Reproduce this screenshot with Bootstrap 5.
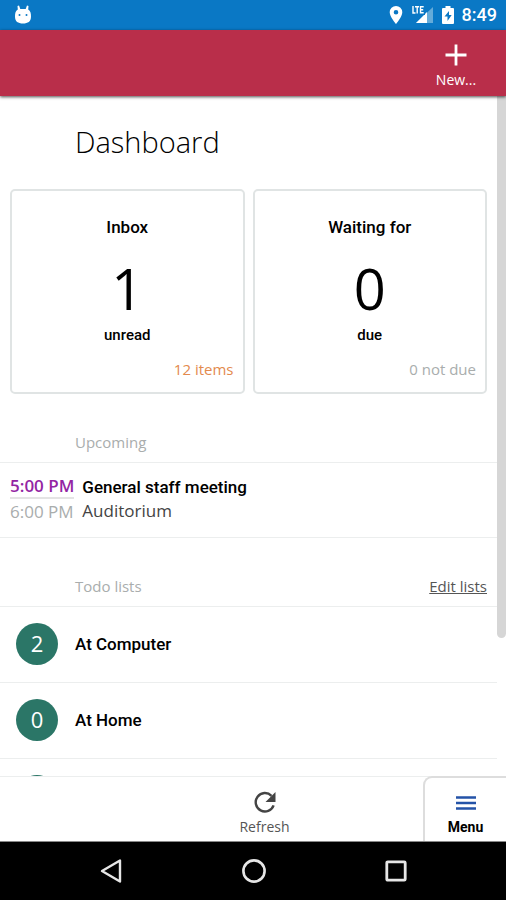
<!DOCTYPE html>
<html lang="en">
<head>
<meta charset="utf-8">
<meta name="viewport" content="width=device-width, initial-scale=1">
<title>Dashboard</title>
<link rel="stylesheet" href="https://cdn.jsdelivr.net/npm/bootstrap@5.3.0/dist/css/bootstrap.min.css">
<style>
  body { font-family: "Open Sans", "Noto Sans", sans-serif; font-size: 15px; line-height: 24px; color: #111; background: #fff; }
  svg { display: block; }
  a { color: inherit; }
  .rb { font-family: Roboto, "Noto Sans", sans-serif; font-weight: 500; color: #000; }
  .status-bar { height: 30px; background: #0a78c5; color: #fff; padding: 0 9px 0 14px; }
  .clock { font-size: 18px; line-height: 30px; color: #fff; }
  .app-bar { height: 66px; background: #b92e4a; box-shadow: 0 1px 3px rgba(0,0,0,.7); z-index: 2; padding: 7px 20px 0 0; }
  .plain-btn { background: none; border: 0; padding: 0; }
  .new-btn { width: 60px; color: #fff; font-size: 14px; line-height: 20px; }
  .scroll-thumb { top: 0; right: 0; width: 9px; height: 542px; background: #d6d6d6; border-radius: 0 0 5px 5px; }
  .page { margin-right: 9px; }
  .page h1 { font-size: 29px; line-height: 40px; font-weight: 300; margin: 26px 0 27px; padding-left: 75px; color: #000; }
  .tiles { gap: 8px; padding: 0 10px; }
  .tile { border: 2px solid #e0e4e4; border-radius: 5px; height: 205px; padding: 24px 9px 11px; text-decoration: none; color: #000; }
  .tile-count { font-size: 56px; line-height: 60px; font-weight: 400; margin: 19px 0 7px; }
  .tile-title, .event-title, .todo { font-size: 17px; }
  .tile-unit { font-size: 15px; line-height: 20px; }
  .orange { color: #e38a4e; }
  .dim { color: #a9adad; }
  .section-head { font-size: 15px; padding: 0 10px 8px 75px; }
  .section-head h2 { font-size: 15px; line-height: 24px; font-weight: 400; margin: 0; }
  .edit-link { color: #555; }
  .rule-top { border-top: 1px solid #eceeee; }
  .rule-bottom { border-bottom: 1px solid #eceeee; }
  .event { padding: 12px 10px; gap: 8px; color: #444; font-size: 17px; line-height: 24px; }
  .time-start { color: #9325a3; font-weight: 600; line-height: 22px; border-bottom: 2px solid #e4e4e4; }
  .time-end { line-height: 26px; }
  .todo { height: 76px; gap: 17px; padding: 0 16px 1px; text-decoration: none; }
  .count-dot { width: 42px; height: 42px; border-radius: 50%; background: #2b7667; color: #fff; font-size: 22px; line-height: 40px; padding-bottom: 2px; font-family: "Open Sans", sans-serif; font-weight: 400; }
  .tool-bar { height: 66px; background: #fff; border-bottom: 1px solid #888; font-size: 14px; line-height: 20px; }
  .refresh-btn { color: #555; padding: 14px 0 0 106px; }
  .menu-btn { width: 83px; gap: 7px; border-left: 2px solid #ddd; border-top: 2px solid #ddd; border-radius: 9px 0 0 0; padding-top: 18px; margin-top: -1px; background: #fff; font-weight: 700; }
  .nav-keys { height: 58px; background: #000; padding: 0 40px; }
</style>
<script src="https://cdn.jsdelivr.net/npm/bootstrap@5.3.0/dist/js/bootstrap.bundle.min.js"></script>
</head>
<body class="vh-100 d-flex flex-column overflow-hidden">

<div class="status-bar d-flex align-items-center flex-shrink-0">
  <svg width="18" height="20" viewBox="0 0 18 20" fill="#fff" aria-hidden="true"><path d="M3.500 1l1.500-.5L6.300 4h5.400L13 .5l1.500.5-.3 3.500C16.500 6 17 8 17 11.500c0 5-3 7-8 7s-8-2-8-7C1 8 1.500 6 3.800 4.500z"/><circle cx="5.500" cy="10" r="1" fill="#0a78c5"/><circle cx="12.500" cy="10" r="1" fill="#0a78c5"/></svg>
  <div class="d-flex align-items-center ms-auto">
    <svg width="14" height="18" viewBox="0 0 14 18" fill="#fff" aria-hidden="true"><path fill-rule="evenodd" d="M7 0a6.300 6.300 0 0 0-6.300 6.300C.7 11 7 18 7 18s6.300-7 6.300-11.700A6.300 6.300 0 0 0 7 0zm0 4a2.300 2.300 0 1 1 0 4.600A2.300 2.300 0 0 1 7 4z"/></svg>
    <svg class="ms-2" width="23" height="20" viewBox="0 0 23 20" aria-label="LTE"><path d="M22 2v16H5z" fill="#65abd9"/><path d="M16 7v11H5z" fill="#fff"/><path d="M0 0h14v10H0z" fill="#0a78c5"/><path d="M2 1v7h2.500M4 1.700h4M6.200 1.700V8.500M12.700 1.700H9.500v6.100h3.200M9.500 4.700h2.700" fill="none" stroke="#fff" stroke-width="1.400"/></svg>
    <svg class="ms-2" width="12" height="18" viewBox="0 0 12 18" aria-hidden="true"><path d="M3.500 0h5v2H11a1 1 0 0 1 1 1v14a1 1 0 0 1-1 1H1a1 1 0 0 1-1-1V3a1 1 0 0 1 1-1h2.500z" fill="#fff"/><path d="M7 5L2.500 10.500H5.500V15L9.700 9H7z" fill="#0a78c5"/></svg>
    <span class="rb clock ms-2">8:49</span>
  </div>
</div>

<header class="app-bar d-flex justify-content-end align-items-center flex-shrink-0 position-relative">
  <button class="plain-btn new-btn d-flex flex-column align-items-center" type="button">
    <svg class="mb-1" width="22" height="22" viewBox="0 0 22 22" aria-hidden="true"><path d="M11 .5v21M.5 11h21" stroke="#fff" stroke-width="2.800"/></svg>
    New...
  </button>
</header>

<main class="flex-grow-1 overflow-hidden position-relative">
  <div class="page">
    <h1>Dashboard</h1>
    <div class="tiles d-flex">
      <a href="#inbox" class="tile d-flex flex-column text-center flex-fill w-50">
        <span class="rb tile-title">Inbox</span>
        <span class="tile-count">1</span>
        <span class="rb tile-unit">unread</span>
        <span class="orange text-end mt-auto">12 items</span>
      </a>
      <a href="#waiting" class="tile d-flex flex-column text-center flex-fill w-50">
        <span class="rb tile-title">Waiting for</span>
        <span class="tile-count">0</span>
        <span class="rb tile-unit">due</span>
        <span class="dim text-end mt-auto">0 not due</span>
      </a>
    </div>

    <section class="pt-3 mt-3">
      <div class="section-head rule-bottom dim pt-1"><h2>Upcoming</h2></div>
      <div class="event d-flex rule-bottom">
        <div>
          <div class="time-start">5:00 PM</div>
          <div class="time-end dim">6:00 PM</div>
        </div>
        <div>
          <div class="rb event-title">General staff meeting</div>
          <div>Auditorium</div>
        </div>
      </div>
    </section>

    <section class="pt-3 mt-3">
      <div class="section-head rule-bottom dim d-flex justify-content-between pt-1">
        <h2>Todo lists</h2><a class="edit-link" href="#edit">Edit lists</a>
      </div>
      <a href="#computer" class="todo rb d-flex align-items-center rule-bottom"><span class="count-dot d-flex align-items-center justify-content-center">2</span>At Computer</a>
      <a href="#home" class="todo rb d-flex align-items-center rule-bottom"><span class="count-dot d-flex align-items-center justify-content-center">0</span>At Home</a>
      <a href="#next" class="todo rb d-flex align-items-center rule-bottom" aria-label="Next list"><span class="count-dot"></span></a>
    </section>
  </div>
  <div class="scroll-thumb position-absolute"></div>
</main>

<footer class="tool-bar rule-top d-flex justify-content-between flex-shrink-0">
  <button class="plain-btn refresh-btn flex-grow-1 d-flex flex-column align-items-center" type="button">
    <svg class="mb-1" width="22" height="22" viewBox="0 0 22 22" aria-hidden="true"><path d="M17.500 4.800A9.200 9.200 0 1 0 19.600 14.300" fill="none" stroke="#444" stroke-width="2.400"/><path d="M21.500 1v10H11.500z" fill="#444"/></svg>
    Refresh
  </button>
  <button class="plain-btn menu-btn rb d-flex flex-column align-items-center" type="button">
    <svg width="20" height="14" viewBox="0 0 20 14" aria-hidden="true"><path d="M0 1.500h20M0 7h20M0 12.500h20" stroke="#2453a8" stroke-width="2.600"/></svg>
    Menu
  </button>
</footer>

<nav class="nav-keys d-flex justify-content-around align-items-center flex-shrink-0" aria-label="System">
  <button class="plain-btn" type="button" aria-label="Back"><svg width="24" height="26" viewBox="0 0 24 26"><path d="M21 2.500v21L3 13z" fill="none" stroke="#e6e6e6" stroke-width="2.400" stroke-linejoin="round"/></svg></button>
  <button class="plain-btn" type="button" aria-label="Home"><svg width="24" height="24" viewBox="0 0 24 24"><circle cx="12" cy="12" r="10.600" fill="none" stroke="#e6e6e6" stroke-width="2.600"/></svg></button>
  <button class="plain-btn" type="button" aria-label="Recent apps"><svg width="22" height="22" viewBox="0 0 22 22"><rect x="1.800" y="1.800" width="18.400" height="18.400" rx="1" fill="none" stroke="#e6e6e6" stroke-width="2.800"/></svg></button>
</nav>
</body>
</html>
